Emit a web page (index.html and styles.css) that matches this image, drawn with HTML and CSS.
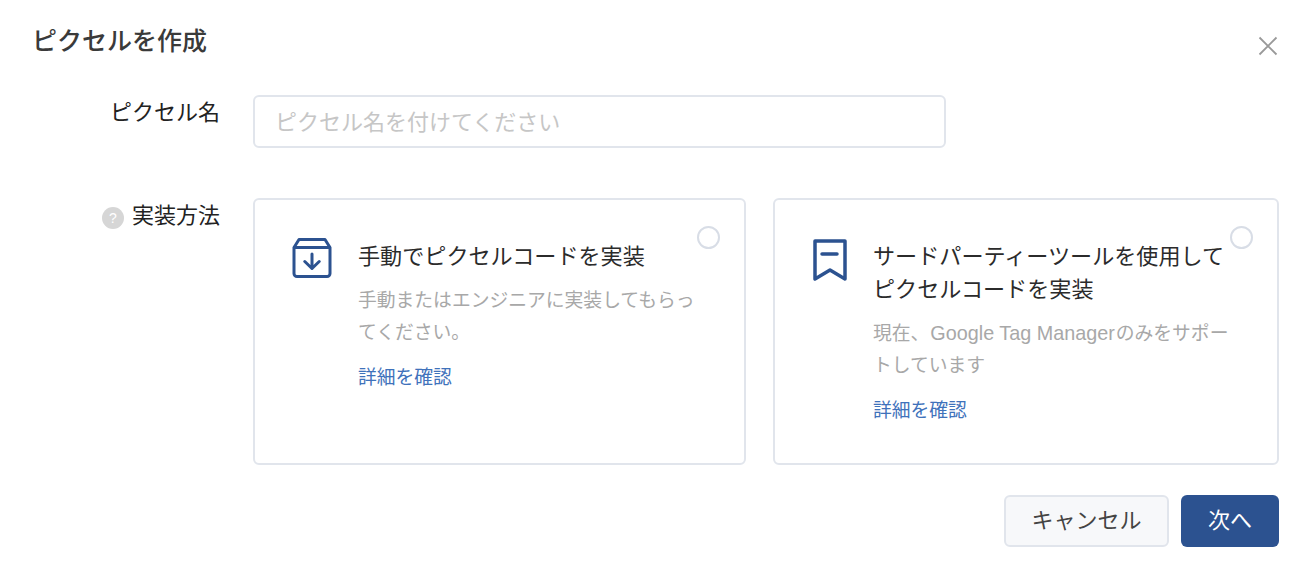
FILE: index.html
```html
<!DOCTYPE html>
<html lang="ja">
<head>
    <meta charset="UTF-8">
    <title>ピクセルを作成</title>
    <link rel="stylesheet" href="styles.css">
</head>
<body>
    <div class="modal">
        <div class="modal-header">
            <h1 class="modal-title">ピクセルを作成</h1>
            <button class="close-btn" aria-label="閉じる">
                <svg width="20" height="20" viewBox="0 0 20 20"><path d="M1.500 1.500l17 17M18.500 1.500l-17 17" fill="none" stroke="#999" stroke-width="1.800"/></svg>
            </button>
        </div>
        <div class="form-row name-row">
            <label class="form-label">ピクセル名</label>
            <div class="name-input">ピクセル名を付けてください</div>
        </div>
        <div class="form-row">
            <label class="form-label method-label"><span class="help-icon">?</span>実装方法</label>
            <div class="cards">
                <div class="card card-manual">
                    <span class="radio"></span>
                    <svg class="card-icon" width="40" height="42" viewBox="0 1 40 42" fill="none" stroke="#2c5290" stroke-width="3" stroke-linecap="round" stroke-linejoin="round">
                        <path d="M2 10.500L7 2.500h26l5 8M2 10.500h36v26a3 3 0 0 1-3 3H5a3 3 0 0 1-3-3z"/>
                        <path d="M20 17v14.500M12.800 24.500l7.200 7 7.200-7"/>
                    </svg>
                    <div class="card-body">
                        <div class="card-title">手動でピクセルコードを実装</div>
                        <p class="card-desc">手動またはエンジニアに実装してもらってください。</p>
                        <a class="card-link">詳細を確認</a>
                    </div>
                </div>
                <div class="card card-third">
                    <span class="radio"></span>
                    <svg class="card-icon" width="34" height="42" viewBox="0 0 34 42" fill="none" stroke="#2c5290" stroke-width="3.500" stroke-linecap="round" stroke-linejoin="round">
                        <path d="M2 2h30v38l-15-9-15 9z"/>
                        <path d="M9 15h15"/>
                    </svg>
                    <div class="card-body">
                        <div class="card-title">サードパーティーツールを使用して<br>ピクセルコードを実装</div>
                        <p class="card-desc">現在、<span class="latin">Google Tag Manager</span>のみをサポー<br>トしています</p>
                        <a class="card-link">詳細を確認</a>
                    </div>
                </div>
            </div>
        </div>
        <div class="modal-footer">
            <button class="btn btn-cancel">キャンセル</button>
            <button class="btn btn-primary">次へ</button>
        </div>
    </div>
</body>
</html>
```

FILE: styles.css
```css
* { margin: 0; padding: 0; box-sizing: border-box; }
body {
    background: #fff;
    font-family: "Liberation Sans", "Noto Sans CJK JP", sans-serif;
    color: #333;
}
.modal {
    width: 1310px;
    height: 565px;
    padding: 21px 31px 0 32px;
}
.modal-header {
    display: flex;
    justify-content: space-between;
    align-items: flex-start;
    height: 74px;
}
.modal-title {
    margin-top: 2px;
    font-size: 25px;
    line-height: 36px;
    font-weight: 500;
    color: #3a3a3a;
}
.close-btn {
    background: none;
    border: none;
    margin: 15px 1px 0 0;
    height: 20px;
}
.form-row { display: flex; }
.name-row { margin-bottom: 50px; }
.form-label {
    width: 188px;
    margin: 2px 33px 0 0;
    flex-shrink: 0;
    font-size: 22px;
    line-height: 32px;
    text-align: right;
    color: #222;
}
.method-label {
    display: flex;
    justify-content: flex-end;
    align-items: center;
    height: 32px;
}
.help-icon {
    width: 22px;
    height: 22px;
    margin: 4px 8px 0 0;
    border-radius: 50%;
    background: #d6d6d6;
    color: #fff;
    font-size: 14px;
    line-height: 22px;
    text-align: center;
}
.name-input {
    width: 693px;
    height: 53px;
    border: 2px solid #e1e5ec;
    border-radius: 6px;
    padding-left: 20px;
    font-size: 22px;
    line-height: 51px;
    color: #c6c6c6;
}
.cards { display: flex; gap: 27px; }
.card {
    position: relative;
    display: flex;
    gap: 26px;
    height: 267px;
    border: 2px solid #e1e5ec;
    border-radius: 6px;
    padding: 38px 0 0 37px;
}
.card-manual { width: 493px; }
.card-third { width: 506px; }
.card-third .card-icon { margin: 1px 0 0 1px; }
.card-icon { flex-shrink: 0; }
.card-body { padding-top: 2px; }
.card-title {
    font-size: 22.100px;
    line-height: 33px;
    color: #2b2b2b;
}
.card-desc {
    width: 342px;
    margin-top: 12px;
    font-size: 18.800px;
    line-height: 32px;
    color: #a8a8a8;
}
.card-desc .latin {
    margin: 0 1px;
    font-size: 19.800px;
    line-height: 1;
}
.card-third .card-desc { width: 360px; }
.card-link {
    display: block;
    margin-top: 13px;
    font-size: 18.800px;
    line-height: 32px;
    color: #3f72bb;
}
.radio {
    position: absolute;
    top: 26px;
    right: 24px;
    width: 23px;
    height: 23px;
    border: 2px solid #d8dde6;
    border-radius: 50%;
}
.modal-footer {
    display: flex;
    justify-content: flex-end;
    gap: 12px;
    margin-top: 30px;
}
.btn {
    height: 52px;
    border-radius: 6px;
    font-family: inherit;
    font-size: 22px;
    padding-bottom: 6px;
}
.btn-cancel {
    width: 165px;
    border: 2px solid #e1e5ec;
    background: #f7f8fa;
    color: #444;
}
.btn-primary {
    width: 98px;
    border: none;
    background: #2c5290;
    color: #fff;
}
```
